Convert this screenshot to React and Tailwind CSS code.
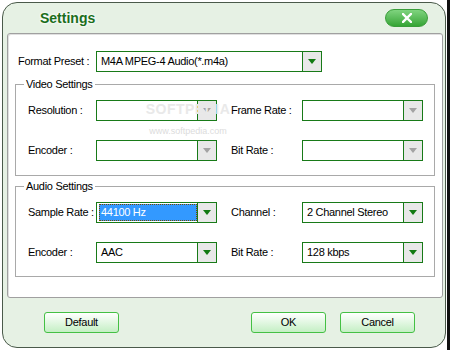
import { useState } from "react";

const font = { fontFamily: '"Liberation Sans", Arial, sans-serif' };

const Arrow = ({ disabled }) => (
    <svg width="8" height="5" viewBox="0 0 8 5">
        <path d="M0 0H8L4 5Z" fill={disabled ? "#a3a3a3" : "#137a13"} />
    </svg>
);

// combo box in the green-bordered style of the dialog
const Combo = ({ value, disabled, selected, width = "w-[121px]" }) => (
    <div className={`flex h-[21px] ${width} border border-[#187a18] bg-white`}>
        <div className="flex flex-1 items-stretch py-[1px] pl-[2px]">
            {selected ? (
                <div className="flex flex-1 items-center border border-dotted border-[#7a4a00] bg-[#3399ff] pl-[1px] text-white">
                    {value}
                </div>
            ) : (
                <div className="flex flex-1 items-center pl-[2px] text-black">
                    {value}
                </div>
            )}
        </div>
        <div className="flex w-[19px] items-center justify-center border-l border-[#187a18] bg-[#e8e8e8]">
            <Arrow disabled={disabled} />
        </div>
    </div>
);

const Row = ({ left, right }) => (
    <div className="flex items-center pl-[12px]">
        <span className="w-[68px]">{left.label}</span>
        <Combo {...left} />
        <span className="ml-[14px] w-[71px]">{right.label}</span>
        <Combo {...right} />
    </div>
);

const Group = ({ title, children, className }) => (
    <fieldset className={`border border-[#a9a9a9] ${className}`}>
        <legend className="ml-[8px] px-[2px] leading-[14px]">{title}</legend>
        {children}
    </fieldset>
);

const Button = ({ children }) => (
    <button className="h-[21px] w-[75px] rounded-[3px] border border-[#44c044] bg-gradient-to-b from-white to-[#c4efc4] text-[11px] text-black">
        {children}
    </button>
);

export default function App() {
    const [preset] = useState("M4A MPEG-4 Audio(*.m4a)");

    return (
        <div
            className="flex h-[350px] w-[450px] overflow-hidden bg-white text-[11px] tracking-[-0.3px]"
            style={font}
        >
            {/* Dialog window */}
            <div className="relative ml-[2px] mt-[2px] flex h-[346px] w-[444px] flex-col rounded-[15px] border border-[#4a5a4a] bg-[#e6f1e4]">
                {/* Title bar */}
                <div className="flex h-[30px] items-center pl-[37px] pr-[17px]">
                    <span className="flex-1 text-[14px] font-bold tracking-normal text-[#1b6e1b] [text-shadow:0_0_3px_#fff,0_0_3px_#fff]">
                        Settings
                    </span>
                    <button className="flex h-[18px] w-[43px] items-center justify-center rounded-full border border-[#3a9d3a] bg-gradient-to-b from-[#7fd47f] to-[#34a534]">
                        <svg width="10" height="10" viewBox="0 0 10 10">
                            <path
                                d="M1 1L9 9M9 1L1 9"
                                stroke="#fff"
                                strokeWidth="2.4"
                                strokeLinecap="square"
                            />
                        </svg>
                    </button>
                </div>

                {/* White content panel */}
                <div className="relative ml-[4px] flex h-[265px] w-[436px] flex-col rounded-[3px] border border-[#a0a0a0] bg-white px-[7px] pb-[19px] pt-[17px] shadow-[inset_1px_1px_0_#e0e0e0]">
                    <div className="flex items-center pl-[3px]">
                        <span className="w-[78px]">Format Preset :</span>
                        <Combo value={preset} width="w-[226px]" />
                    </div>

                    <Group title="Video Settings" className="mt-[5px] h-[99px]">
                        <div className="mt-[9px] flex flex-col gap-[19px]">
                            <Row
                                left={{ label: "Resolution :", disabled: true }}
                                right={{ label: "Frame Rate :", disabled: true }}
                            />
                            <Row
                                left={{ label: "Encoder :", disabled: true }}
                                right={{ label: "Bit Rate :", disabled: true }}
                            />
                        </div>
                    </Group>

                    <Group title="Audio Settings" className="mt-[3px] h-[98px]">
                        <div className="mt-[9px] flex flex-col gap-[19px]">
                            <Row
                                left={{ label: "Sample Rate :", value: "44100 Hz", selected: true }}
                                right={{ label: "Channel :", value: "2 Channel Stereo" }}
                            />
                            <Row
                                left={{ label: "Encoder :", value: "AAC" }}
                                right={{ label: "Bit Rate :", value: "128 kbps" }}
                            />
                        </div>
                    </Group>

                    {/* faint watermark over the video settings */}
                    <div className="pointer-events-none absolute left-[140px] top-[65px] flex w-[80px] flex-col items-center">
                        <span className="text-[14px] font-bold tracking-[0.5px] text-[#e9e9e9]">
                            SOFTPEDIA
                        </span>
                        <span className="mt-[5px] text-[9px] tracking-normal text-[#dcdcdc]">
                            www.softpedia.com
                        </span>
                    </div>
                </div>

                {/* Buttons */}
                <div className="mt-[14px] flex items-center pl-[41px] pr-[30px]">
                    <Button>Default</Button>
                    <div className="flex-1" />
                    <div className="flex gap-[14px]">
                        <Button>OK</Button>
                        <Button>Cancel</Button>
                    </div>
                </div>
            </div>
            <div className="ml-auto h-full w-[3px] bg-[#111]" />
        </div>
    );
}
